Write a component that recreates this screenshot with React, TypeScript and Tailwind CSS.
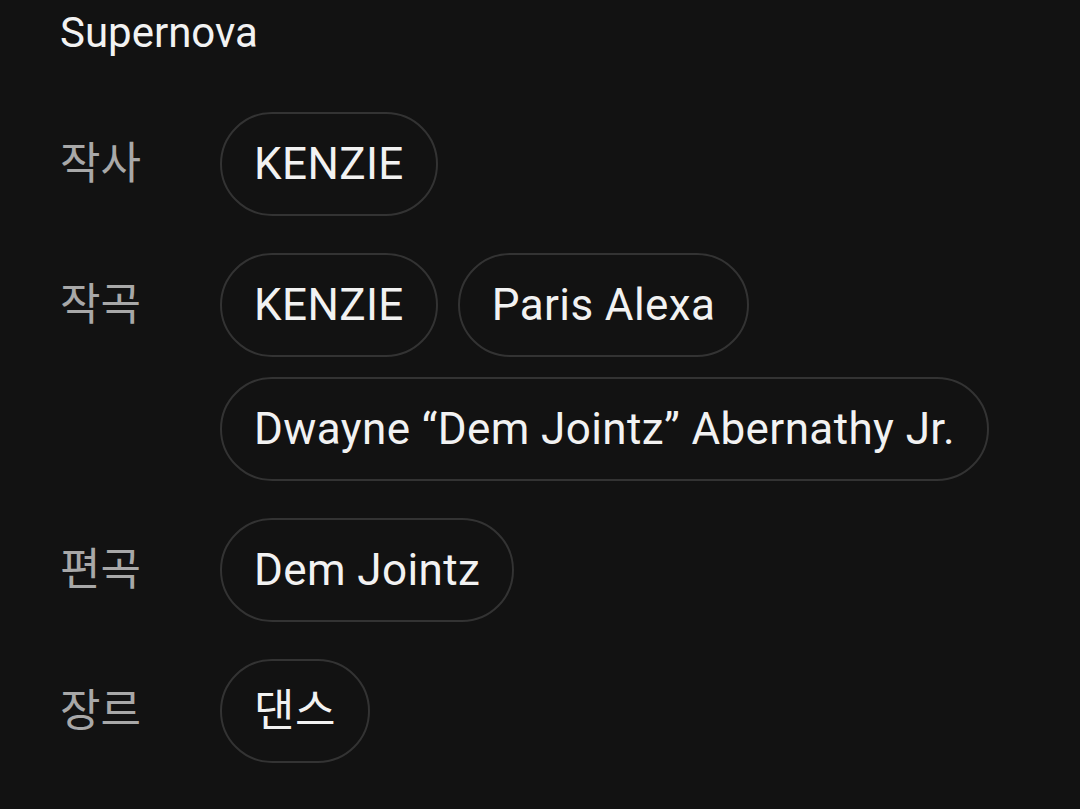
import React from 'react';

const credits: { label: string; names: string[] }[] = [
  { label: '작사', names: ['KENZIE'] },
  { label: '작곡', names: ['KENZIE', 'Paris Alexa', 'Dwayne “Dem Jointz” Abernathy Jr.'] },
  { label: '편곡', names: ['Dem Jointz'] },
  { label: '장르', names: ['댄스'] },
];

const Chip: React.FC<{ text: string }> = ({ text }) => (
  <div className="h-[104px] px-[32px] flex items-center rounded-full border-2 border-[#333333] text-[44px] tracking-[0.4px] text-[#f2f2f2] whitespace-nowrap">
    {text}
  </div>
);

export default function App() {
  return (
    <div
      className="w-[1080px] h-[809px] bg-[#121212] overflow-hidden pl-[60px] pt-[9px]"
      style={{ fontFamily: 'Roboto, "Noto Sans CJK KR", sans-serif' }}
    >
      {/* Title */}
      <div className="h-[48px] leading-[48px] text-[42px] text-[#f2f2f2]">Supernova</div>

      {/* Credits */}
      <div className="mt-[55px] flex flex-col gap-[37px]">
        {credits.map((row) => (
          <div key={row.label} className="flex items-start">
            <div className="w-[160px] h-[104px] flex items-center text-[44px] text-[#a8a8a8] shrink-0">
              {row.label}
            </div>
            <div className="flex flex-wrap gap-[20px] max-w-[800px]">
              {row.names.map((n, i) => (
                <Chip key={i} text={n} />
              ))}
            </div>
          </div>
        ))}
      </div>
    </div>
  );
}
